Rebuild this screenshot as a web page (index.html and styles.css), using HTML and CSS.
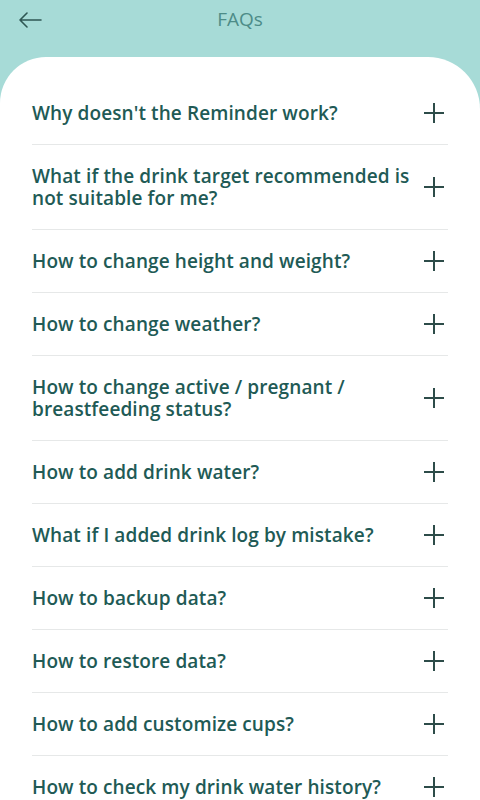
FILE: index.html
```html
<!DOCTYPE html>
<html lang="en">
<head>
    <meta charset="UTF-8">
    <meta name="viewport" content="width=device-width, initial-scale=1.0">
    <title>FAQs</title>
    <link rel="stylesheet" href="styles.css">
</head>
<body>

    <header class="topbar">
        <button class="btn-back" aria-label="Back">
            <svg width="24" height="16" viewBox="0 0 24 16">
                <path d="M23 8H2M9 1L2 8l7 7" fill="none" stroke="#2f5754" stroke-width="1.6" stroke-linecap="round" stroke-linejoin="round"/>
            </svg>
        </button>
        <h1>FAQs</h1>
    </header>

    <main class="card">
        <ul class="faq-list" id="faqList"></ul>
    </main>

    <script>
        const faqs = [
            "Why doesn't the Reminder work?",
            "What if the drink target recommended is not suitable for me?",
            "How to change height and weight?",
            "How to change weather?",
            "How to change active / pregnant / breastfeeding status?",
            "How to add drink water?",
            "What if I added drink log by mistake?",
            "How to backup data?",
            "How to restore data?",
            "How to add customize cups?",
            "How to check my drink water history?"
        ];

        const plus = `<svg class="plus" width="22" height="22" viewBox="0 0 22 22">
            <path d="M11 1v20M1 11h20" stroke="#2d4c49" stroke-width="2"/>
        </svg>`;

        const list = document.getElementById("faqList");
        faqs.forEach(q => {
            list.innerHTML += `<li class="faq-item"><span class="question">${q}</span>${plus}</li>`;
        });
    </script>

</body>
</html>
```

FILE: styles.css
```css
body {
    margin: 0;
    padding: 0;
    background-color: #a7dbd7;
    font-family: "Open Sans", "Noto Sans", sans-serif;
}
.topbar {
    height: 57px;
    display: flex;
    align-items: flex-start;
    justify-content: center;
    position: relative;
}
.topbar h1 {
    margin: 6px 0 0;
    font-size: 19px;
    font-weight: 400;
    color: #4d8c88;
}
.btn-back {
    position: absolute;
    left: 16px;
    top: 10px;
    background: none;
    border: none;
    padding: 2px;
    cursor: pointer;
}
.card {
    background: white;
    border-radius: 46px 52px 0 0;
    padding: 25px 32px 0;
    min-height: 743px;
    box-sizing: border-box;
}
.faq-list {
    list-style: none;
    margin: 0;
    padding: 0;
}
.faq-item {
    display: flex;
    align-items: center;
    justify-content: space-between;
    gap: 8px;
    padding: 20px 0;
    border-bottom: 1px solid #e6e8e8;
}
.question {
    font-size: 19px;
    font-weight: 600;
    line-height: 22px;
    letter-spacing: 0.1px;
    color: #215a55;
}
.plus {
    flex-shrink: 0;
    margin-right: 3px;
}
```
